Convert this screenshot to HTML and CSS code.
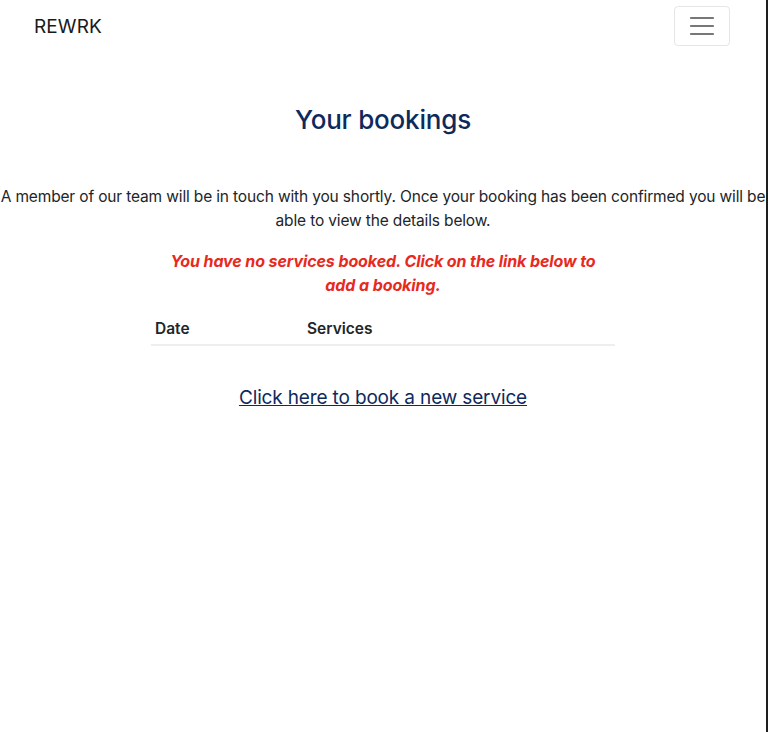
FILE: index.html
```html
<!DOCTYPE html>
<html lang="en">
<head>
<meta charset="utf-8">
<title>Your bookings</title>
<link rel="stylesheet" href="styles.css">
</head>
<body>
<div class="page">
  <nav class="navbar">
    <a class="brand" href="#">REWRK</a>
    <button class="toggler" type="button" aria-label="Toggle navigation">
      <svg width="30" height="30" viewBox="0 0 30 30"><path d="M4 7h22M4 15h22M4 23h22" stroke="#777" stroke-width="2.2" stroke-linecap="round"/></svg>
    </button>
  </nav>
  <main class="main">
    <h1 class="title">Your bookings</h1>
    <p class="intro">A member of our team will be in touch with you shortly. Once your booking has been confirmed you will be able to view the details below.</p>
    <div class="bookings">
      <p class="empty">You have no services booked. Click on the link below to add a booking.</p>
      <table class="table">
        <thead>
          <tr><th class="col-date">Date</th><th>Services</th></tr>
        </thead>
      </table>
    </div>
    <a class="new-link" href="#">Click here to book a new service</a>
  </main>
</div>
</body>
</html>
```

FILE: styles.css
```css
html, body {
  margin: 0;
  padding: 0;
  height: 100%;
}
body {
  background: #fff;
  font-family: Inter, "Noto Sans", sans-serif;
  font-size: 16px;
  color: #212529;
  border-right: 2px solid #1e1e1e;
  box-sizing: border-box;
  width: 768px;
  overflow: hidden;
}
.page {
  width: 766px;
}
.navbar {
  display: flex;
  align-items: center;
  justify-content: space-between;
  padding: 6px 36px 6px 34px;
}
.brand {
  font-size: 19px;
  color: #1a1a1a;
  text-decoration: none;
  letter-spacing: 0.1px;
}
.toggler {
  width: 56px;
  height: 40px;
  background: transparent;
  border: 1px solid rgba(0,0,0,0.1);
  border-radius: 4px;
  display: flex;
  align-items: center;
  justify-content: center;
  padding: 0;
}
.main {
  display: flex;
  flex-direction: column;
  align-items: center;
  text-align: center;
}
.title {
  margin: 52px 0 0;
  font-size: 26px;
  font-weight: 500;
  color: #0e2a5c;
  line-height: 1.2;
  letter-spacing: -0.2px;
}
.intro {
  margin: 50px 0 0;
  line-height: 24px;
  font-size: 15.5px;
  letter-spacing: -0.15px;
}
.bookings {
  width: 464px;
  margin-top: 16px;
}
.empty {
  margin: 0 0 18px;
  padding: 0 16px;
  color: #e8291e;
  font-weight: 700;
  font-style: italic;
  line-height: 24px;
  font-size: 16px;
  letter-spacing: -0.1px;
}
.table {
  width: 100%;
  border-collapse: collapse;
  text-align: left;
}
.table th {
  padding: 4px 4px 6px;
  font-weight: 600;
  font-size: 15.5px;
  border-bottom: 2px solid #eceeef;
}
.col-date {
  width: 144px;
}
.new-link {
  margin-top: 40px;
  font-size: 19px;
  color: #0e2a5c;
  text-decoration: underline;
  letter-spacing: -0.15px;
}
```
